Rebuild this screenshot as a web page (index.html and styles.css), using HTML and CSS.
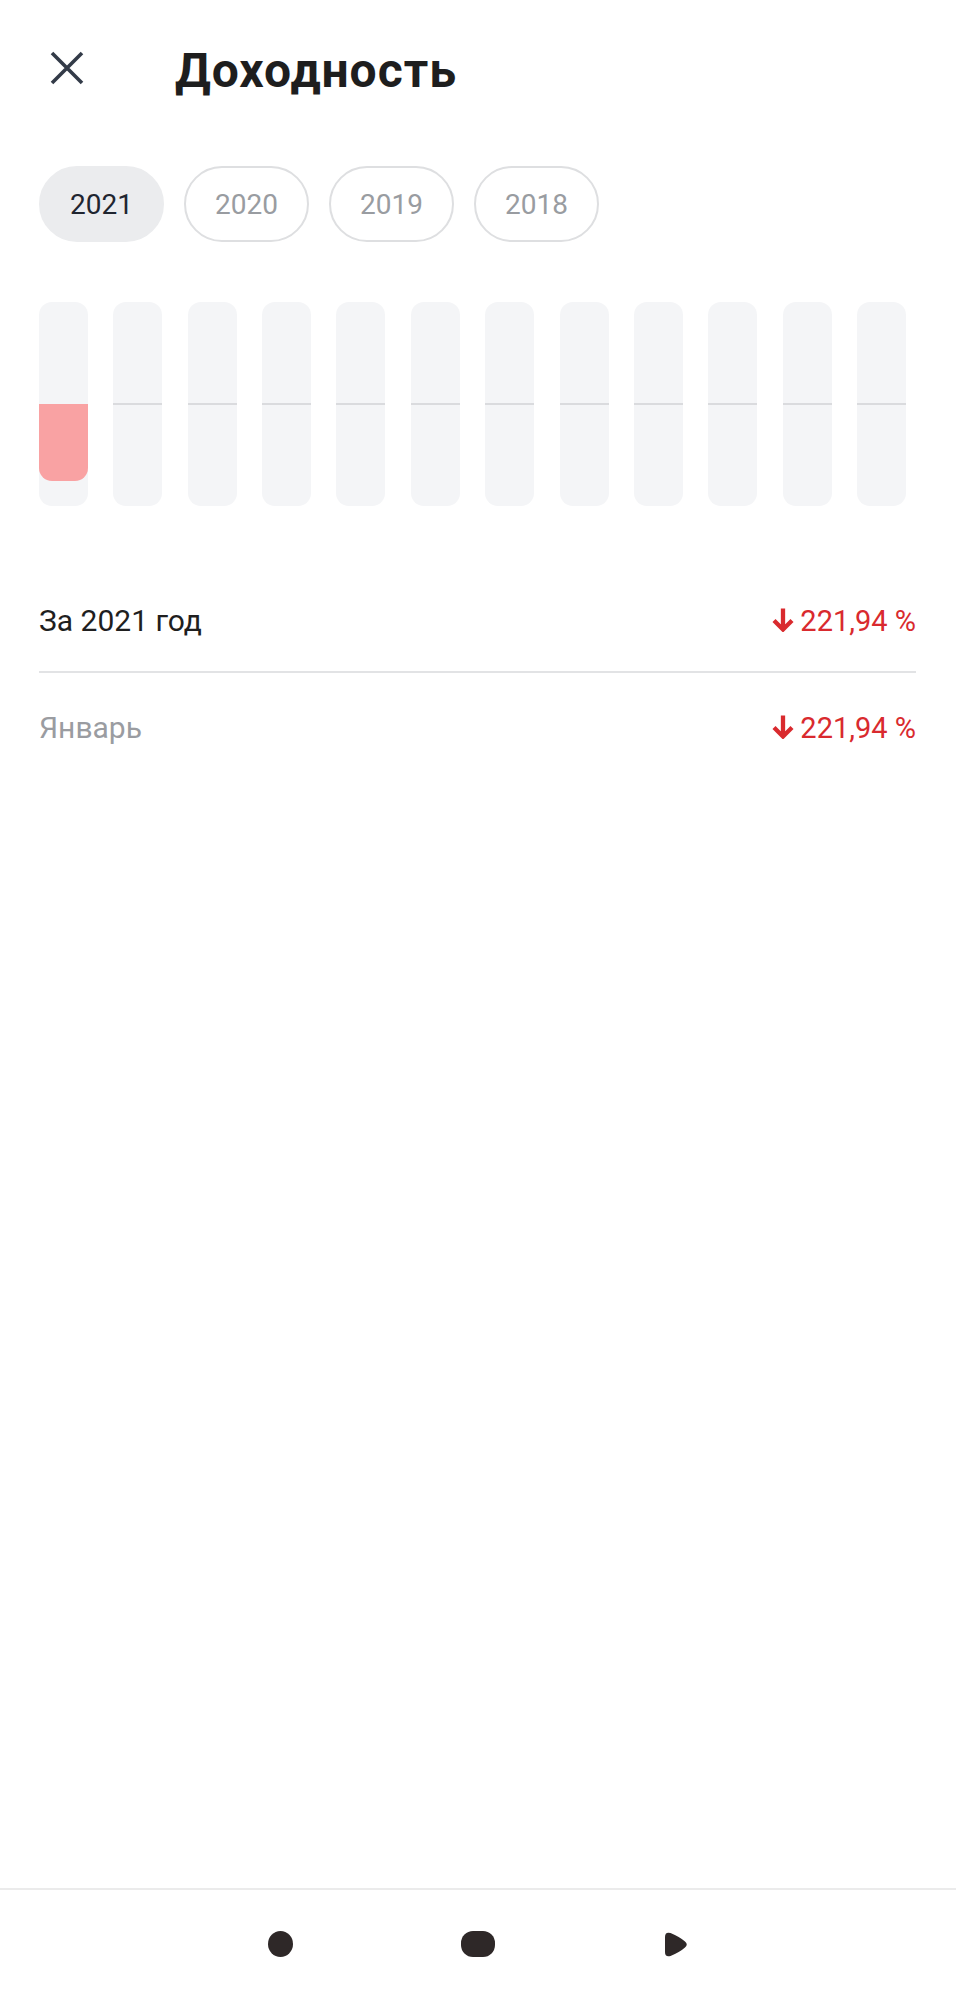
FILE: index.html
```html
<!DOCTYPE html>
<html lang="ru">
<head>
<meta charset="utf-8">
<title>Доходность</title>
<link rel="stylesheet" href="styles.css">
</head>
<body>
<div class="page">
  <header class="header">
    <svg class="close" width="48" height="48" viewBox="0 0 48 48" aria-hidden="true">
      <path d="M9 9 L39 39 M39 9 L9 39" stroke="#333b48" stroke-width="3.6" stroke-linecap="butt" fill="none"/>
    </svg>
    <h1 class="title">Доходность</h1>
  </header>

  <div class="chips">
    <div class="chip chip-active">2021</div>
    <div class="chip">2020</div>
    <div class="chip">2019</div>
    <div class="chip">2018</div>
  </div>

  <div class="bars">
    <div class="bar"><div class="bar-half"></div><div class="bar-fill" style="height:77px"></div></div>
    <div class="bar"><div class="bar-upper"></div><div class="bar-line"></div></div>
    <div class="bar"><div class="bar-upper"></div><div class="bar-line"></div></div>
    <div class="bar"><div class="bar-upper"></div><div class="bar-line"></div></div>
    <div class="bar"><div class="bar-upper"></div><div class="bar-line"></div></div>
    <div class="bar"><div class="bar-upper"></div><div class="bar-line"></div></div>
    <div class="bar"><div class="bar-upper"></div><div class="bar-line"></div></div>
    <div class="bar"><div class="bar-upper"></div><div class="bar-line"></div></div>
    <div class="bar"><div class="bar-upper"></div><div class="bar-line"></div></div>
    <div class="bar"><div class="bar-upper"></div><div class="bar-line"></div></div>
    <div class="bar"><div class="bar-upper"></div><div class="bar-line"></div></div>
    <div class="bar"><div class="bar-upper"></div><div class="bar-line"></div></div>
  </div>

  <div class="rows">
    <div class="row row-year">
      <span class="row-label">За 2021 год</span>
      <span class="row-value">
        <svg class="arrow" width="22" height="24" viewBox="0 0 22 24" aria-hidden="true">
          <path d="M11 0.5 V21 M2 12.5 L11 21.5 L20 12.5" stroke="#d92a2e" stroke-width="4.3" fill="none" stroke-linejoin="miter" stroke-linecap="butt"/>
        </svg>
        <span>221,94 %</span>
      </span>
    </div>
    <div class="row row-month">
      <span class="row-label muted">Январь</span>
      <span class="row-value">
        <svg class="arrow" width="22" height="24" viewBox="0 0 22 24" aria-hidden="true">
          <path d="M11 0.5 V21 M2 12.5 L11 21.5 L20 12.5" stroke="#d92a2e" stroke-width="4.3" fill="none" stroke-linejoin="miter" stroke-linecap="butt"/>
        </svg>
        <span>221,94 %</span>
      </span>
    </div>
  </div>

  <div class="spacer"></div>

  <nav class="sysnav">
    <div class="nav-cell"><span class="nav-dot"></span></div>
    <div class="nav-cell"><span class="nav-pill"></span></div>
    <div class="nav-cell">
      <svg width="24" height="27" viewBox="0 0 24 27" aria-hidden="true">
        <path d="M1 6 Q1 0.5 6.5 2 Q16 6 21 10.5 Q24.5 13.5 21 16.5 Q16 21 6.5 25 Q1 26.5 1 21 Z" fill="#2e2828"/>
      </svg>
    </div>
  </nav>
</div>
</body>
</html>
```

FILE: styles.css
```css
html, body {
  margin: 0;
  padding: 0;
  background: #ffffff;
}

body {
  font-family: Roboto, "Liberation Sans", Arial, sans-serif;
  color: #1f1f1f;
}

.page {
  width: 956px;
  height: 2000px;
  display: flex;
  flex-direction: column;
}

.header {
  display: flex;
  align-items: flex-start;
  padding: 43px 0 0 43px;
}

.close {
  display: block;
  margin-top: 1px;
}

.title {
  margin: 0 0 0 84px;
  font-size: 48px;
  line-height: 56px;
  font-weight: 700;
  color: #1e1e1e;
  letter-spacing: 1px;
}

.chips {
  display: flex;
  gap: 20px;
  padding-left: 39px;
  margin-top: 67px;
}

.chip {
  box-sizing: border-box;
  width: 125px;
  height: 76px;
  border-radius: 38px;
  border: 2px solid #dedfe1;
  display: flex;
  align-items: center;
  justify-content: center;
  font-size: 28px;
  color: #999ca1;
}

.chip-active {
  background: #ebecee;
  border-color: #ebecee;
  color: #1f2530;
}

.bars {
  display: flex;
  justify-content: space-between;
  width: 867px;
  margin-left: 39px;
  margin-top: 60px;
}

.bar {
  width: 49px;
  height: 204px;
  border-radius: 13px;
  background: #f4f5f7;
  display: flex;
  flex-direction: column;
  overflow: hidden;
}

.bar-upper {
  height: 101px;
  flex: none;
}

.bar-half {
  height: 102px;
  flex: none;
}

.bar-line {
  height: 2px;
  background: #dadbde;
  flex: none;
}

.bar-fill {
  flex: none;
  background: #f9a2a3;
  border-radius: 0 0 13px 13px;
}

.rows {
  margin: 65px 40px 0 39px;
}

.row {
  display: flex;
  align-items: center;
  justify-content: space-between;
  font-size: 30px;
  line-height: 36px;
}

.row-year {
  height: 100px;
  border-bottom: 2px solid #e2e3e5;
}

.row-month {
  height: 110px;
}

.row-label {
  color: #1f1f1f;
}

.muted {
  color: #9a9ca1;
}

.row-value {
  display: flex;
  align-items: center;
  gap: 6px;
  font-size: 29px;
  color: #d92a2e;
}

.arrow {
  display: block;
  margin-top: -2px;
}

.spacer {
  flex: 1;
}

.sysnav {
  height: 112px;
  border-top: 2px solid #ebebeb;
  display: flex;
  justify-content: center;
  align-items: center;
  padding-bottom: 2px;
  box-sizing: border-box;
}

.nav-cell {
  width: 198px;
  display: flex;
  justify-content: center;
  align-items: center;
}

.nav-dot {
  width: 25px;
  height: 26px;
  border-radius: 50%;
  background: #2e2828;
}

.nav-pill {
  width: 34px;
  height: 26px;
  border-radius: 12px;
  background: #2e2828;
}
```
